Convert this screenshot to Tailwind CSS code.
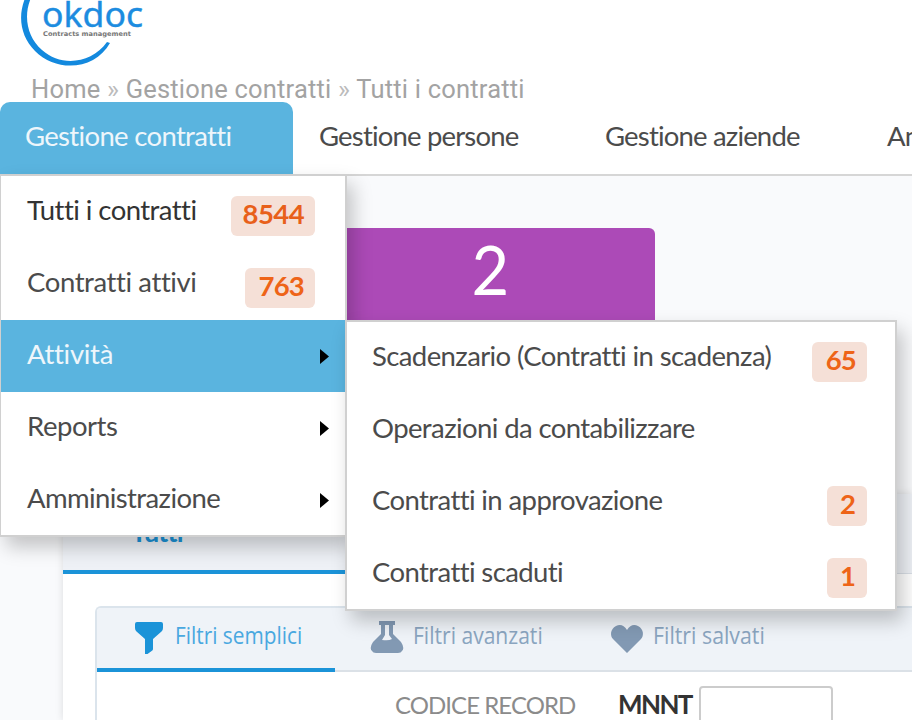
<!DOCTYPE html>
<html lang="it">
<head>
    <meta charset="UTF-8">
    <meta name="viewport" content="width=device-width, initial-scale=1.0">
    <title>okdoc - Tutti i contratti</title>
    <script src="https://cdn.jsdelivr.net/npm/@tailwindcss/browser@4"></script>
</head>
<body class="relative w-[912px] h-[720px] overflow-hidden bg-[#f9fafc] font-['Lato',sans-serif] text-[27.5px] tracking-[-0.6px] text-[#4b4b4b]">

    <!-- Header -->
    <header class="h-[176px] bg-white border-b-2 border-[#d6d6d6] flex flex-col">
        <div class="h-[72px] shrink-0 pl-5">
            <svg class="block tracking-normal" width="130" height="70" viewBox="20 0 130 70">
                <path d="M28 -8C17 12 19 35 35 51C57 73 95 70 110 43L107 42C91 64 61 67 42 50C26 36 22 12 34 -8Z" fill="#1389de"/>
                <text x="42" y="27" font-family="Noto Sans" font-size="35" textLength="101" lengthAdjust="spacingAndGlyphs" fill="#1c8ce0" stroke="#1c8ce0" stroke-width="0.4">okdoc</text>
                <text x="43" y="36" font-family="DejaVu Sans" font-weight="bold" font-size="6.5" textLength="88" lengthAdjust="spacingAndGlyphs" fill="#777">Contracts management</text>
            </svg>
        </div>
        <div class="h-[30px] shrink-0 pl-[31px] pt-[2px] font-['Roboto',sans-serif] text-[25.5px] tracking-[0.2px] leading-[30px] text-[#a3a3a3] whitespace-nowrap">
            <a>Home</a> <span class="text-[#bbb]">»</span> <a>Gestione contratti</a> <span class="text-[#bbb]">»</span> <a>Tutti i contratti</a>
        </div>
        <nav class="flex h-[72px] leading-[68px] whitespace-nowrap tracking-[-0.82px]">
            <a class="w-[293px] shrink-0 pl-[25px] rounded-t-[10px] bg-[#5ab4df] text-[#eef6fb] tracking-[-0.67px]">Gestione contratti</a>
            <a class="w-[286px] shrink-0 pl-[26px]">Gestione persone</a>
            <a class="w-[282px] shrink-0 pl-[26px]">Gestione aziende</a>
            <a class="w-[51px] shrink-0 pl-[26px] overflow-hidden">Anagrafiche</a>
        </nav>
    </header>

    <!-- Contenuto -->
    <main>
        <div class="mt-[52px] ml-[325px] w-[330px] h-[140px] rounded-md bg-[#ac4ab7] text-white text-center text-[67px] leading-[83px]"><span class="inline-block scale-x-[0.97]">2</span></div>
        <section class="mt-[126px] ml-[63px] h-[226px] bg-white shadow-[0_0_8px_rgba(0,0,0,0.12)]">
            <div class="h-[80px] bg-[#eef1f6] flex border-b border-[#d9dfe6]">
                <a class="h-[80px] w-[310px] pl-[68px] border-b-4 border-[#1b93d8] text-[#1b93d8] text-[27px] font-bold tracking-[-0.8px] leading-[75px]">Tutti</a>
            </div>
            <div class="mt-8 ml-8 h-[114px] overflow-hidden border-2 border-r-0 border-b-0 border-[#dbe4ec] rounded-tl-md">
                <div class="flex h-[64px] bg-[#eff3f8] border-b-2 border-[#dbe1e7] font-['Open_Sans',sans-serif] text-[24.5px] tracking-normal text-[#8aa5c0] leading-[54px] whitespace-nowrap">
                    <a class="flex w-[238px] h-[64px] border-b-4 border-[#1b93d8] pl-[37px] text-[#49a8e0]">
                        <svg class="mt-[13px] shrink-0" width="30" height="34" viewBox="0 0 30 34" fill="#1b93d8"><path d="M3 1H27Q29 1 29 3V7Q29 9 27.500 10.500L19 18V28Q19 29 18 29.700L13.500 33H11V18L2.500 10.500Q1 9 1 7V3Q1 1 3 1Z"/></svg>
                        <span class="ml-[11px] inline-block origin-left scale-x-[0.85]">Filtri semplici</span>
                    </a>
                    <a class="flex w-[240px] pl-[35px]">
                        <svg class="mt-[12px] shrink-0" width="34" height="34" viewBox="0 0 34 34" fill="#8299b3"><path fill-rule="evenodd" d="M9 1H25V5H23V14L31 22Q35 28 32 31Q31 33 28 33H6Q3 33 2 31Q-1 28 3 22L11 14V5H9ZM15 5V15L12 20Q19 21 22 19L19 15V5Z"/></svg>
                        <span class="ml-[9px] inline-block origin-left scale-x-[0.86]">Filtri avanzati</span>
                    </a>
                    <a class="flex w-[240px] pl-[35px]">
                        <svg class="mt-[16px] shrink-0" width="34" height="30" viewBox="0 0 34 30" fill="#8299b3"><path d="M17 6C20 1 24 0 28 2C34 5 34 12 31 15L17 29L3 15C0 12 0 5 6 2C10 0 14 1 17 6Z"/></svg>
                        <span class="ml-[9px] inline-block origin-left scale-x-[0.87]">Filtri salvati</span>
                    </a>
                </div>
                <div class="flex pt-[14px] pl-[298px] whitespace-nowrap">
                    <label class="w-[223px] text-[24px] tracking-[-0.95px] leading-[38px] text-[#8b8b8b]">CODICE RECORD</label>
                    <span class="w-[81px] text-[26px] tracking-[-1.6px] leading-[37px] font-bold text-[#333]">MNNT</span>
                    <input type="text" class="w-[134px] h-[50px] border-2 border-[#ccc] rounded-sm bg-white">
                </div>
            </div>
        </section>
    </main>

    <!-- Menu a tendina -->
    <ul class="absolute left-0 top-[174px] w-[347px] h-[363px] bg-white border-2 border-l-[1px] border-[#d0d0d0] shadow-[6px_10px_18px_rgba(0,0,0,0.22)] leading-[68px] whitespace-nowrap">
        <li class="flex justify-between h-[72px] pl-[26px] pr-[30px] text-[#333] tracking-[-0.55px]">Tutti i contratti <span class="mt-[20px] h-10 pl-3 pr-[11px] rounded-md bg-[#f5e0d7] text-[#e8601a] font-bold tracking-[-0.6px] leading-[35px]">8544</span></li>
        <li class="flex justify-between h-[72px] pl-[26px] pr-[30px] tracking-[-0.4px]">Contratti attivi <span class="mt-[20px] h-10 pl-[14px] pr-[11px] rounded-md bg-[#f5e0d7] text-[#ee6418] font-bold tracking-[-0.8px] leading-[35px]">763</span></li>
        <li class="flex justify-between h-[72px] pl-[26px] pr-[16px] bg-[#5ab4df] text-[#eef6fb] tracking-[-0.3px]">Attività <svg class="mt-[29px]" width="9" height="15"><path d="M0 0L9 7.500L0 15Z" fill="#000"/></svg></li>
        <li class="flex justify-between h-[72px] pl-[26px] pr-[16px] tracking-[-0.45px]">Reports <svg class="mt-[29px]" width="9" height="15"><path d="M0 0L9 7.500L0 15Z" fill="#000"/></svg></li>
        <li class="flex justify-between h-[71px] pl-[26px] pr-[16px]">Amministrazione <svg class="mt-[29px]" width="9" height="15"><path d="M0 0L9 7.500L0 15Z" fill="#000"/></svg></li>
    </ul>

    <!-- Sottomenu Attività -->
    <ul class="absolute left-[345px] top-[320px] w-[552px] h-[291px] bg-white border-2 border-[#d0d0d0] shadow-[6px_10px_18px_rgba(0,0,0,0.22)] leading-[68px] whitespace-nowrap">
        <li class="flex justify-between h-[72px] pl-[25px] pr-[28px]">Scadenzario (Contratti in scadenza) <span class="mt-[20px] h-10 pl-[14px] pr-[11px] rounded-md bg-[#f5e0d7] text-[#ee6418] font-bold tracking-[-0.8px] leading-[35px]">65</span></li>
        <li class="h-[72px] pl-[25px]">Operazioni da contabilizzare</li>
        <li class="flex justify-between h-[72px] pl-[25px] pr-[28px]">Contratti in approvazione <span class="mt-[20px] h-10 w-10 pl-[13px] rounded-md bg-[#f5e0d7] text-[#ee6418] font-bold leading-[35px]">2</span></li>
        <li class="flex justify-between h-[71px] pl-[25px] pr-[28px]">Contratti scaduti <span class="mt-[20px] h-10 w-10 pl-[13px] rounded-md bg-[#f5e0d7] text-[#ee6418] font-bold leading-[35px]">1</span></li>
    </ul>
</body>
</html>
